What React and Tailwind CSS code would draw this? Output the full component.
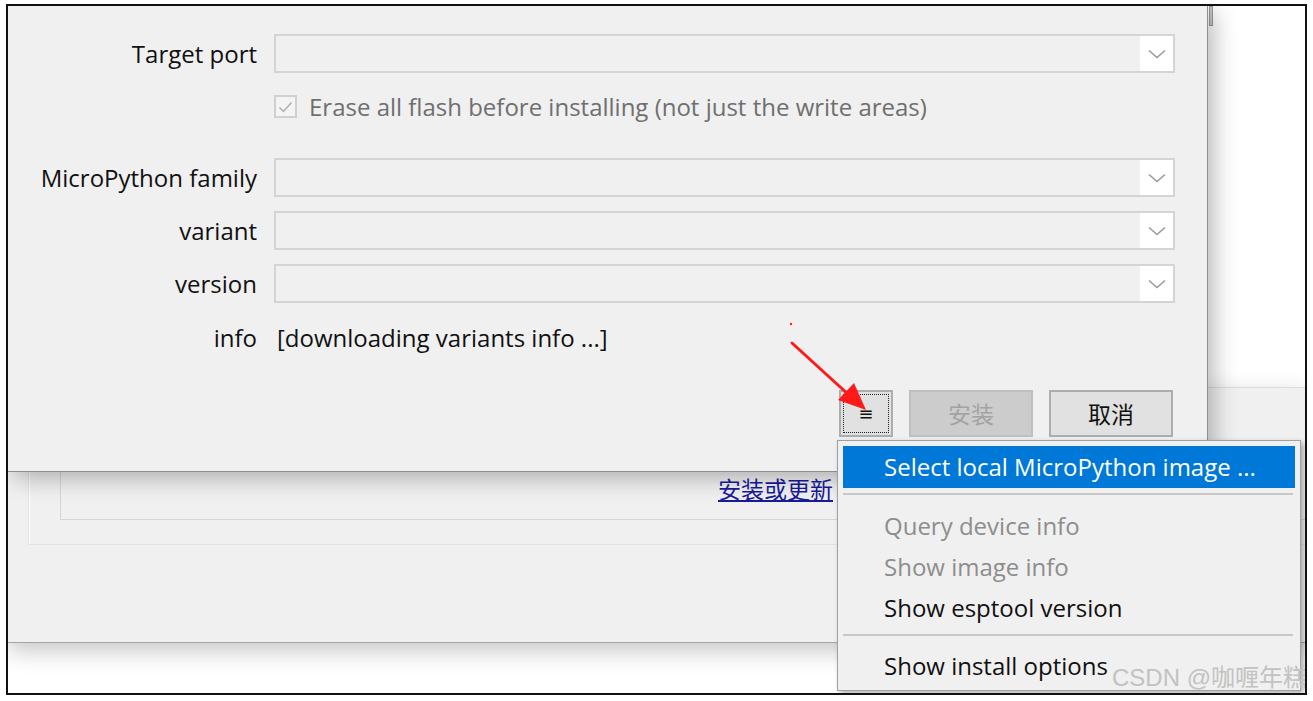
import React from 'react';

const ui = { fontFamily: '"Open Sans", "Noto Sans", "Noto Sans CJK SC", sans-serif' };
const cjk = { fontFamily: '"Noto Sans CJK SC", "Noto Sans", sans-serif' };

function Chevron() {
  return (
    <svg width="18" height="10" viewBox="0 0 18 10" fill="none">
      <path d="M1 1.5 L9 8.5 L17 1.5" stroke="#9a9a9a" strokeWidth="1.6" />
    </svg>
  );
}

function Combo() {
  return (
    <div className="flex-1 h-[39px] flex border-2 border-[#d4d4d4] bg-[#f0f0f0]">
      <div className="flex-1" />
      <div className="w-[33px] bg-white flex items-center justify-center">
        <Chevron />
      </div>
    </div>
  );
}

function Row({ label, children, className = '' }) {
  return (
    <div className={`flex items-center ${className}`}>
      <div className="w-[249px] text-right text-[24px] text-[#111] leading-none whitespace-nowrap">{label}</div>
      <div className="w-[17px] shrink-0" />
      {children}
    </div>
  );
}

function MenuItem({ children, active, disabled }) {
  return (
    <div
      className={`flex items-center pl-[41px] text-[24px] leading-none whitespace-nowrap ${
        active ? 'bg-[#0078d7] text-white h-[42px]' : disabled ? 'h-[41px] text-[#8d8d8d]' : 'h-[41px] text-[#111]'
      }`}
    >
      {children}
    </div>
  );
}

export default function App() {
  return (
    <div className="w-[1313px] h-[701px] bg-white pl-[6px] pt-[4px]" style={ui}>
      <div className="w-[1301px] h-[691px] border-2 border-[#111] relative overflow-hidden bg-white">
        {/* background window */}
        <div className="absolute left-0 top-[381px] w-[1300px] h-[256px] bg-[#f0f0f0] border-b border-[#a5a5a5] border-t border-t-[#dcdcdc] shadow-[0_8px_22px_rgba(0,0,0,0.22)]">
          <div className="h-full overflow-hidden">
            <div className="ml-[20px] mt-[-40px] h-[197px] w-[1400px] border border-[#e2e2e2] shadow-[inset_1px_1px_0_#fff] pb-[24px]">
              <div className="ml-[31px] h-full border border-[#d6d6d6] pt-[127px] pl-[657px]">
                <span className="text-[23px] leading-none text-[#1a1a9c] underline whitespace-nowrap" style={cjk}>
                  安装或更新
                </span>
              </div>
            </div>
          </div>
        </div>

        {/* little scroll stub top right */}
        <div className="absolute left-[1201px] top-0 w-[4px] h-[20px] bg-[#c8c8c8] border border-[#9a9a9a]" />

        {/* dialog */}
        <div className="absolute left-0 top-0 w-[1200px] h-[466px] bg-[#f0f0f0] border-r border-b border-[#8e8e8e] shadow-[6px_6px_22px_rgba(0,0,0,0.28)]">
          <div className="pt-[28px] pr-[32px]">
            <Row label="Target port" className="h-[39px]">
              <Combo />
            </Row>
            <Row label="" className="mt-[22px] h-[23px]">
              <div className="w-[23px] h-[23px] border-2 border-[#d0d0d0] bg-[#f4f4f4] flex items-center justify-center">
                <svg width="15" height="12" viewBox="0 0 15 12" fill="none">
                  <path d="M1.5 6.5 L5.5 10.5 L13.5 1.5" stroke="#b0b0b0" strokeWidth="1.5" />
                </svg>
              </div>
              <span className="ml-[12px] text-[24px] leading-none text-[#6f6f6f] whitespace-nowrap">
                Erase all flash before installing (not just the write areas)
              </span>
            </Row>
            <Row label="MicroPython family" className="mt-[40px] h-[39px]">
              <Combo />
            </Row>
            <Row label="variant" className="mt-[14px] h-[39px]">
              <Combo />
            </Row>
            <Row label="version" className="mt-[14px] h-[39px]">
              <Combo />
            </Row>
            <Row label="info" className="mt-[15px] h-[39px]">
              <span className="ml-[3px] text-[24px] leading-none text-[#111] whitespace-nowrap">[downloading variants info ...]</span>
            </Row>
          </div>
          <div className="mt-[33px] pr-[34px] flex justify-end gap-[16px]">
            <div className="w-[54px] h-[47px] bg-[#e1e1e1] border-2 border-[#adadad] p-[2px]">
              <div className="w-full h-full border border-dotted border-[#222] flex items-center justify-center text-[18px] leading-none text-[#111]" style={{ fontFamily: '"DejaVu Sans", sans-serif' }}>
                ≡
              </div>
            </div>
            <div className="w-[124px] h-[47px] bg-[#cccccc] border-2 border-[#bfbfbf] flex items-center justify-center text-[23px] text-[#a3a3a3]" style={cjk}>
              安装
            </div>
            <div className="w-[124px] h-[47px] bg-[#e1e1e1] border-2 border-[#adadad] flex items-center justify-center text-[23px] text-[#111]" style={cjk}>
              取消
            </div>
          </div>
        </div>

        {/* popup menu */}
        <div className="absolute left-[829px] top-[434px] w-[464px] h-[251px] bg-[#f0f0f0] border border-[#a0a0a0] shadow-[3px_3px_6px_rgba(0,0,0,0.3)] p-[5px]">
          <MenuItem active>Select local MicroPython image ...</MenuItem>
          <div className="mt-[5px] mb-[10px] h-[2px] bg-[#c8c8c8] mr-[2px]" />
          <MenuItem disabled>Query device info</MenuItem>
          <MenuItem disabled>Show image info</MenuItem>
          <MenuItem>Show esptool version</MenuItem>
          <div className="mt-[6px] mb-[9px] h-[2px] bg-[#c8c8c8] mr-[2px]" />
          <div className="flex items-center h-[41px]">
            <div className="pl-[41px] text-[24px] leading-none text-[#111] whitespace-nowrap">Show install options</div>
          </div>
        </div>

        {/* watermark */}
        <div className="absolute left-[1104px] top-[660px] text-[24px] leading-none text-[#c2c2c2] whitespace-nowrap" style={{ fontFamily: '"Liberation Sans", "Noto Sans CJK SC", sans-serif' }}>
          CSDN @咖喱年糕
        </div>

        {/* red annotation arrow */}
        <svg className="absolute left-0 top-0" width="1301" height="691" viewBox="0 0 1301 691">
          <circle cx="783" cy="318" r="1.2" fill="#ff2020" />
          <line x1="784" y1="337" x2="842" y2="390" stroke="#ff1a1a" strokeWidth="3" strokeLinecap="round" />
          <polygon points="858,404 830,394 846,377" fill="#ff1a1a" />
        </svg>
      </div>
    </div>
  );
}
